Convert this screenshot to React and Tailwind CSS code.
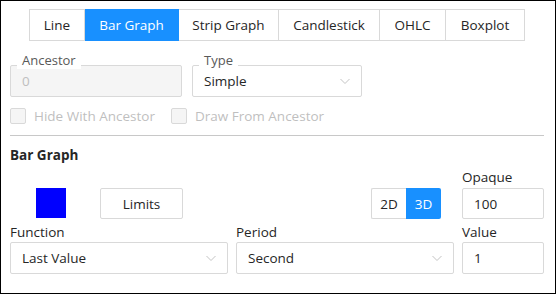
import React from "react";

// ===== Small pieces =====
const Chevron = () => (
  <svg width="12" height="12" viewBox="0 0 12 12" className="shrink-0">
    <path d="M1.5 4 L6 8.5 L10.5 4" fill="none" stroke="#c4c4c4" strokeWidth="1" />
  </svg>
);

const Select = ({ value, className = "" }) => (
  <div
    className={`h-[32px] border border-[#d9d9d9] rounded-[2px] bg-white flex items-center justify-between pl-[11px] pr-[10px] ${className}`}
  >
    <span className="text-[#262626]">{value}</span>
    <Chevron />
  </div>
);

const FloatField = ({ label, children, className = "" }) => (
  <div className={`relative ${className}`}>
    <span className="absolute -top-[14px] left-[7px] bg-white px-[5px] text-[13px] leading-[18px] text-[#595959]">
      {label}
    </span>
    {children}
  </div>
);

const Checkbox = ({ label }) => (
  <label className="flex items-center gap-[8px] h-[17px] text-[#bfbfbf]">
    <span className="w-[16px] h-[16px] border border-[#d9d9d9] bg-[#f5f5f5] rounded-[2px]" />
    {label}
  </label>
);

const tabs = [
  { name: "Line", w: "w-[56px]" },
  { name: "Bar Graph", w: "w-[94px]", active: true },
  { name: "Strip Graph", w: "w-[100px]" },
  { name: "Candlestick", w: "w-[101px]" },
  { name: "OHLC", w: "w-[66px]" },
  { name: "Boxplot", w: "w-[79px]" },
];

// ===== Main Component =====
export default function App() {
  return (
    <div
      className="w-[556px] h-[294px] border border-black bg-white pl-[9px] pr-[11px] pt-[8px] text-[13.5px] leading-[18px] text-[#262626]"
      style={{ fontFamily: '"Open Sans", "Noto Sans", sans-serif' }}
    >
      {/* Tabs */}
      <div className="flex justify-center">
        {tabs.map((t, i) => (
          <div
            key={t.name}
            className={`${t.w} h-[32px] flex items-center justify-center border-y border-r ${
              i === 0 ? "border-l" : ""
            } ${
              t.active
                ? "bg-[#1890ff] border-[#1890ff] text-white"
                : "border-[#d9d9d9] text-[#262626]"
            }`}
          >
            {t.name}
          </div>
        ))}
      </div>

      {/* Ancestor / Type */}
      <div className="flex gap-[10px] mt-[24px]">
        <FloatField label="Ancestor" className="w-[172px]">
          <div className="h-[32px] border border-[#d9d9d9] rounded-[2px] bg-[#f5f5f5] flex items-center pl-[11px] text-[#bfbfbf]">
            0
          </div>
        </FloatField>
        <FloatField label="Type" className="w-[170px]">
          <Select value="Simple" />
        </FloatField>
      </div>

      {/* Checkboxes */}
      <div className="flex gap-[16px] mt-[10px]">
        <Checkbox label="Hide With Ancestor" />
        <Checkbox label="Draw From Ancestor" />
      </div>

      <div className="h-px bg-[#c8c8c8] mt-[11px]" />

      <div className="font-bold mt-[10px]">Bar Graph</div>

      {/* Color / Limits / 2D3D / Opaque */}
      <div className="flex items-end mt-[4px]">
        <div className="w-[30px] h-[30px] bg-[#0000ff] ml-[26px] mb-[1px]" />
        <div className="w-[83px] h-[31px] ml-[34px] border border-[#d9d9d9] rounded-[2px] flex items-center justify-center">
          Limits
        </div>
        <div className="flex ml-auto h-[31px]">
          <div className="w-[35px] border border-[#d9d9d9] border-r-0 rounded-l-[2px] flex items-center justify-center">
            2D
          </div>
          <div className="w-[35px] bg-[#1890ff] text-white rounded-r-[2px] flex items-center justify-center">
            3D
          </div>
        </div>
        <div className="w-[82px] ml-[21px]">
          <div className="mb-[2px]">Opaque</div>
          <div className="h-[31px] border border-[#d9d9d9] rounded-[2px] flex items-center pl-[11px]">
            100
          </div>
        </div>
      </div>

      {/* Function / Period / Value */}
      <div className="flex gap-[8px] mt-[4px]">
        <div className="w-[218px]">
          <div className="mb-[1px]">Function</div>
          <Select value="Last Value" />
        </div>
        <div className="w-[218px]">
          <div className="mb-[1px]">Period</div>
          <Select value="Second" />
        </div>
        <div className="w-[82px]">
          <div className="mb-[1px]">Value</div>
          <div className="h-[32px] border border-[#d9d9d9] rounded-[2px] flex items-center pl-[11px]">
            1
          </div>
        </div>
      </div>
    </div>
  );
}
